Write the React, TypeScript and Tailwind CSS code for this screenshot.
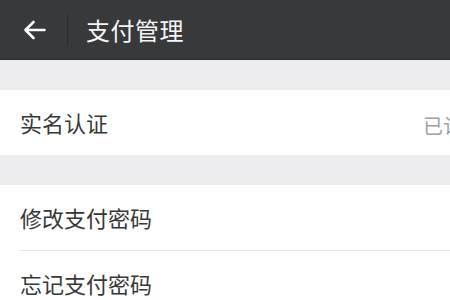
export default function App() {
  return (
    <div
      className="w-[450px] h-[300px] overflow-hidden bg-[#ededef]"
      style={{ fontFamily: '"Noto Sans CJK SC", "Noto Sans", sans-serif' }}
    >
      <div className="w-[520px]">
        <header className="h-[60px] bg-[#38393b] flex items-center border-b border-[#2a2a2b]">
          <div className="w-[67px] flex items-center pl-[23px]">
            <svg width="23" height="20" viewBox="0 0 23 20" fill="none">
              <path
                d="M21.5 10H2.5M10.5 2L2.5 10L10.5 18"
                stroke="#ffffff"
                strokeWidth="2.6"
                strokeLinecap="round"
                strokeLinejoin="round"
              />
            </svg>
          </div>
          <div className="w-px h-[32px] bg-[#2c2d2f]" />
          <h1 className="ml-[18px] text-[24px] leading-none text-[#f5f5f5] tracking-[0.5px]">
            支付管理
          </h1>
        </header>

        <div className="h-[30px]" />

        <div className="bg-white h-[65px] flex items-center pl-[20px] pr-[37px]">
          <span className="text-[22px] text-[#383838]">实名认证</span>
          <span className="ml-auto text-[20px] text-[#a0a0a0] pt-[6px]">已认证</span>
        </div>

        <div className="h-[30px]" />

        <div className="bg-white">
          <div className="h-[65px] flex items-center pl-[20px]">
            <span className="text-[22px] text-[#383838]">修改支付密码</span>
          </div>
          <div className="ml-[20px] h-px bg-[#e6e6e6]" />
          <div className="h-[65px] flex items-center pl-[20px]">
            <span className="text-[22px] text-[#383838]">忘记支付密码</span>
          </div>
        </div>
      </div>
    </div>
  );
}
